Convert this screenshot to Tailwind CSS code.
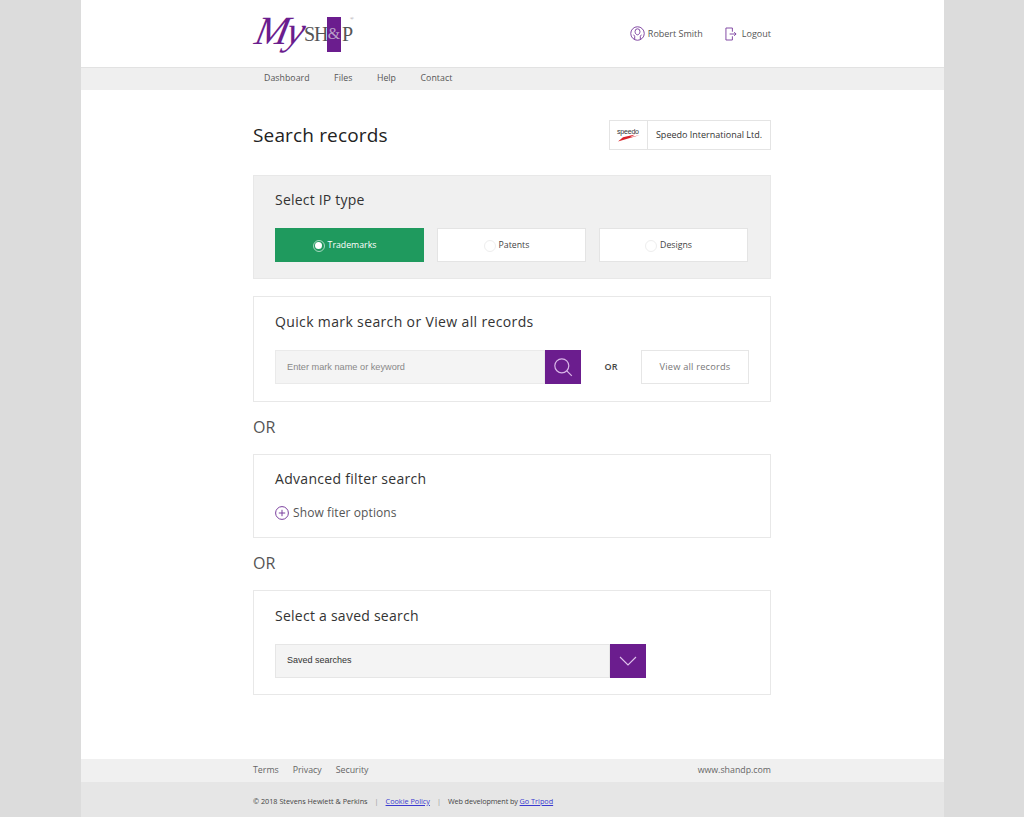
<!DOCTYPE html>
<html lang="en">
<head>
  <meta charset="UTF-8" />
  <title>Search records – MySH&amp;P</title>
  <script src="https://cdn.jsdelivr.net/npm/@tailwindcss/browser@4"></script>
</head>
<body class="bg-[#dcdcdc] font-['Open_Sans',sans-serif] text-[#333]">
  <div class="ml-[81px] w-[863px] h-[817px] bg-white flex flex-col">

    <!-- header -->
    <header class="h-[67px] shrink-0">
      <div class="w-[518px] ml-[172px] h-full flex items-center justify-between">
        <a class="flex items-start h-[40px] mt-[7px] font-['Liberation_Serif',serif] text-[#555]">
          <span class="italic text-[#6b1d8e] text-[40px] leading-[32px] w-[51px] mt-[-2px] pl-[3px] -skew-x-12 tracking-[-2px] font-['Liberation_Serif',serif]">My</span>
          <span class="text-[20px] leading-[34px] tracking-[-1px] w-[23px]">SH</span>
          <span class="w-[14px] h-[35px] bg-[#6b1d8e] text-[#b9a0c8] text-[16px] leading-[34px] flex justify-center">&amp;</span>
          <span class="text-[20px] leading-[34px] w-[9px] pl-[1px]">P</span>
          <span class="text-[5px] leading-[5px] text-[#888] mt-[-1px]">®</span>
        </a>
        <div class="flex items-center text-[9px] text-[#555]">
          <svg class="w-[15px] h-[15px] mr-[3px]" viewBox="0 0 16 16" fill="none" stroke="#7b3f9e" stroke-width="1">
            <circle cx="8" cy="8" r="7.2"/>
            <path d="M5 14.2v-3.2c0-1-1.2-1.5-1.2-1.5M11 14.2v-3.2c0-1 1.2-1.5 1.2-1.5M5.4 5.8a2.6 2.8 0 1 1 5.2 0c0 2-1.2 3.6-2.6 3.6s-2.6-1.6-2.6-3.6z"/>
          </svg>
          <span class="mr-[22px]">Robert Smith</span>
          <svg class="w-[12px] h-[14px] mr-[5px]" viewBox="0 0 13 15" fill="none" stroke="#7b3f9e" stroke-width="1">
            <path d="M8 5V1H1v13h7v-4M5 7.5h7M10 5.5l2 2-2 2"/>
          </svg>
          <span>Logout</span>
        </div>
      </div>
    </header>

    <!-- nav -->
    <nav class="h-[23px] shrink-0 bg-[#efefef] border-t border-[#e2e2e2]">
      <div class="ml-[183px] flex gap-[24.5px] text-[8.75px] leading-[21px] text-[#555] tracking-[0.05px]">
        <a>Dashboard</a>
        <a>Files</a>
        <a>Help</a>
        <a>Contact</a>
      </div>
    </nav>

    <!-- content -->
    <main class="flex-1 w-[518px] ml-[172px]">
      <div class="h-[85px] flex items-start justify-between pt-[30px]">
        <h1 class="text-[19px] leading-[30px] font-normal text-[#222] tracking-[0.15px]">Search records</h1>
        <div class="w-[162px] h-[30px] flex border border-[#e4e4e4] bg-white">
          <div class="w-[38px] border-r border-[#e4e4e4] relative">
            <span class="absolute left-[7px] top-[7px] font-['Liberation_Sans',sans-serif] text-[7px] leading-[7px] text-[#333] tracking-[-0.2px]">speedo</span>
            <svg class="absolute left-[7px] top-[13px] w-[24px] h-[8px]" viewBox="0 0 24 8"><path d="M1 7.5 23 1 13 3.2 18 .5 6 3.2z" fill="#d8232a"/></svg>
          </div>
          <div class="flex-1 text-[9px] leading-[28px] text-center text-[#333]">Speedo International Ltd.</div>
        </div>
      </div>

      <section class="h-[104px] bg-[#f0f0f0] border border-[#e8e8e8] px-[21px] pt-[14px]">
        <h2 class="text-[14px] leading-[20px] text-[#333] font-normal tracking-[0.2px]">Select IP type</h2>
        <div class="flex gap-[13px] mt-[18px]">
          <label class="w-[149px] h-[34px] bg-[#1f9a5e] text-white flex items-center justify-center gap-[3px] pr-[10px] pt-[1px] text-[8.75px]">
            <span class="w-[12px] h-[12px] rounded-full border border-white/60 flex items-center justify-center"><span class="w-[7px] h-[7px] rounded-full bg-white"></span></span>
            Trademarks
          </label>
          <label class="w-[149px] h-[34px] bg-white border border-[#e4e4e4] text-[#444] flex items-center justify-center gap-[3px] pr-[10px] pt-[1px] text-[8.75px]">
            <span class="w-[12px] h-[12px] rounded-full border border-[#eee]"></span>
            Patents
          </label>
          <label class="w-[149px] h-[34px] bg-white border border-[#e4e4e4] text-[#444] flex items-center justify-center gap-[3px] pr-[10px] pt-[1px] text-[8.75px]">
            <span class="w-[12px] h-[12px] rounded-full border border-[#eee]"></span>
            Designs
          </label>
        </div>
      </section>

      <section class="h-[106px] mt-[17px] border border-[#e8e8e8] px-[21px] pt-[15px]">
        <h2 class="text-[14px] leading-[20px] text-[#333] font-normal tracking-[0.36px]">Quick mark search or View all records</h2>
        <div class="flex items-center mt-[18px]">
          <div class="w-[270px] h-[34px] bg-[#f4f4f4] border border-[#eaeaea] pl-[11px] text-[9.2px] leading-[32px] text-[#888] font-['Liberation_Sans',sans-serif]">Enter mark name or keyword</div>
          <button class="w-[36px] h-[34px] bg-[#6b1d8e] flex items-center justify-center">
            <svg class="w-[20px] h-[20px]" viewBox="0 0 20 20" fill="none" stroke="#d9b6e8" stroke-width="1.2"><circle cx="8.8" cy="8.8" r="7"/><path d="M13.8 13.8l5 5"/></svg>
          </button>
          <span class="w-[60px] text-center text-[9px] font-semibold text-[#444]">OR</span>
          <button class="w-[108px] h-[34px] border border-[#e6e6e6] text-[9.25px] text-[#777] tracking-[0.2px]">View all records</button>
        </div>
      </section>

      <p class="h-[52px] pt-[13px] text-[16px] leading-[24px] text-[#555]">OR</p>

      <section class="h-[84px] border border-[#e8e8e8] px-[21px] pt-[14px]">
        <h2 class="text-[14px] leading-[20px] text-[#333] font-normal tracking-[0.3px]">Advanced filter search</h2>
        <div class="flex items-center gap-[4px] mt-[15px] text-[12px] leading-[18px] text-[#555] tracking-[0.1px]">
          <svg class="w-[14px] h-[14px]" viewBox="0 0 14 14" fill="none" stroke="#7b3f9e" stroke-width="1"><circle cx="7" cy="7" r="6.4"/><path d="M7 3.8v6.4M3.8 7h6.4"/></svg>
          Show fiter options
        </div>
      </section>

      <p class="h-[52px] pt-[13px] text-[16px] leading-[24px] text-[#555]">OR</p>

      <section class="h-[105px] border border-[#e8e8e8] px-[21px] pt-[15px]">
        <h2 class="text-[14px] leading-[20px] text-[#333] font-normal tracking-[0.25px]">Select a saved search</h2>
        <div class="flex mt-[18px]">
          <div class="w-[335px] h-[34px] bg-[#f4f4f4] border border-[#e6e6e6] pl-[11px] text-[9px] leading-[31px] text-[#333] font-['Liberation_Sans',sans-serif]">Saved searches</div>
          <button class="w-[36px] h-[34px] bg-[#6b1d8e] flex items-center justify-center">
            <svg class="w-[18px] h-[10px]" viewBox="0 0 18 10" fill="none" stroke="#e0c4ec" stroke-width="1.1"><path d="M1 1l8 8 8-8"/></svg>
          </button>
        </div>
      </section>
    </main>

    <!-- footer -->
    <footer class="shrink-0">
      <div class="h-[23px] bg-[#f0f0f0] pl-[172px] pr-[173px] pt-[1px] flex items-center justify-between text-[8.8px] text-[#666]">
        <div class="flex gap-[14px]">
          <a>Terms</a>
          <a>Privacy</a>
          <a>Security</a>
        </div>
        <a>www.shandp.com</a>
      </div>
      <div class="h-[35px] bg-[#e6e6e6] pl-[172px] pt-[4px] flex items-center text-[7.25px] text-[#444]">
        <span>© 2018 Stevens Hewlett &amp; Perkins</span>
        <span class="mx-[7px] text-[#999]">|</span>
        <a class="text-[#3a3ad0] underline">Cookie Policy</a>
        <span class="mx-[7px] text-[#999]">|</span>
        <span class="tracking-[-0.1px]">Web development by&nbsp;</span>
        <a class="text-[#3a3ad0] underline">Go Tripod</a>
      </div>
    </footer>
  </div>
</body>
</html>
